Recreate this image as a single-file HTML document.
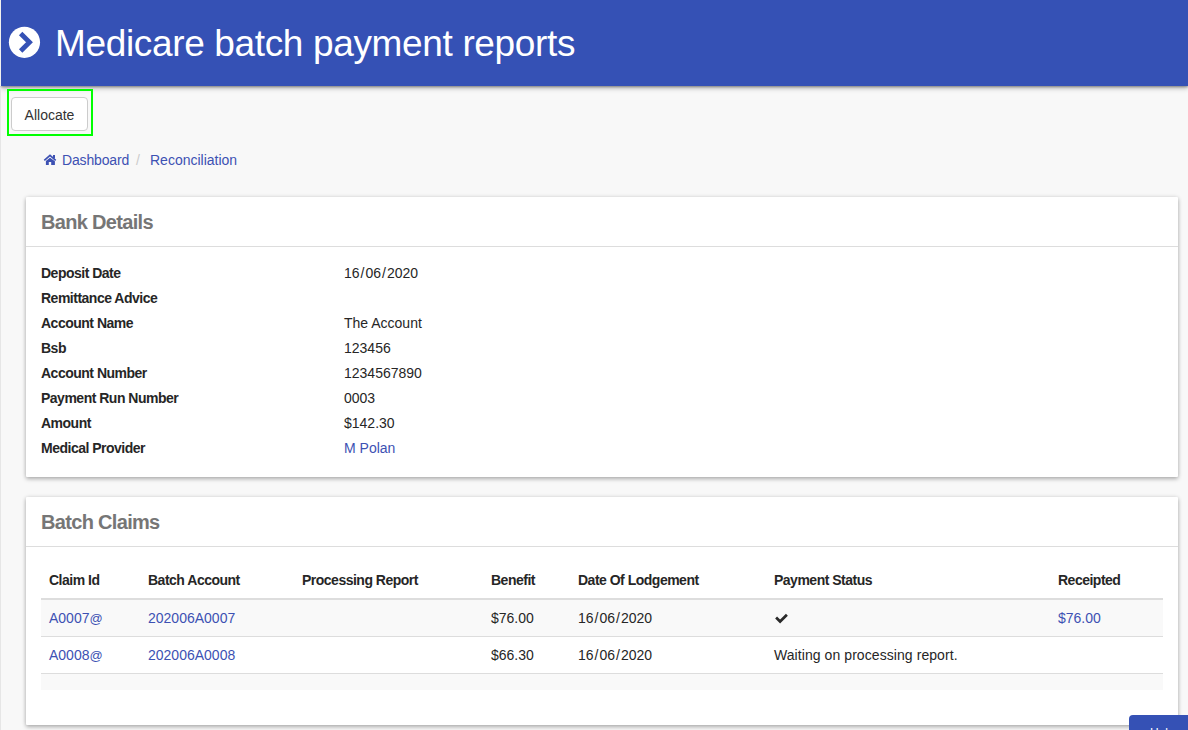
<!DOCTYPE html>
<html><head><meta charset="utf-8">
<style>
*{box-sizing:border-box;margin:0;padding:0}
html,body{width:1188px;height:730px;overflow:hidden;background:#f8f8f8;font-family:"Liberation Sans",sans-serif;color:#262626}
i{font-style:normal;padding:0 1px}
#lstrip{position:absolute;left:0;top:88px;width:1px;height:642px;background:#e6e6e6}
#hdr{position:absolute;left:1px;top:0;width:1187px;height:86px;background:#3551b5;box-shadow:0 1px 2px rgba(0,0,0,.3),0 2px 5px rgba(0,0,0,.3)}
#title{position:absolute;left:54px;top:22px;color:#fff;font-size:37px;line-height:44px;letter-spacing:-0.35px;white-space:nowrap}
#green{position:absolute;left:7px;top:89px;width:86px;height:47px;border:2px solid #00ff00}
#btn{position:absolute;left:11px;top:97px;width:77px;height:34px;border:1px solid #ccc;border-radius:4px;background:#fff;font-size:14px;line-height:35px;text-align:center;color:#333}
.link{color:#3d51b3}
.bc{position:absolute;top:151px;font-size:14px;line-height:18px;white-space:nowrap}
.card{position:absolute;left:26px;width:1152px;background:#fff;border-radius:1px;box-shadow:0 2px 4px rgba(0,0,0,.28),0 0 4px rgba(0,0,0,.1)}
.ctitle{position:absolute;left:15px;font-size:20px;font-weight:bold;color:#767676;line-height:24px;letter-spacing:-0.68px;white-space:nowrap}
.cdiv{position:absolute;left:0;width:100%;height:1px;background:#ddd}
.lbl{position:absolute;left:15px;font-size:14px;font-weight:bold;line-height:18px;letter-spacing:-0.5px;white-space:nowrap}
.val{position:absolute;left:318px;font-size:14px;line-height:18px;white-space:nowrap}
.th{position:absolute;top:571px;font-size:14px;font-weight:bold;line-height:18px;letter-spacing:-0.5px;white-space:nowrap}
.td{position:absolute;font-size:14px;line-height:18px;white-space:nowrap}
.ln{position:absolute;left:41px;width:1122px}
</style></head><body>
<div id="hdr">
  <div id="title">Medicare batch payment reports</div>
</div>
<svg style="position:absolute;left:0;top:0" width="60" height="86" viewBox="0 0 60 86">
  <circle cx="24.45" cy="42.3" r="15.6" fill="#fff"/>
  <polyline points="20.65,33.55 29.5,42.3 20.65,51.05" fill="none" stroke="#3551b5" stroke-width="4.8" stroke-linejoin="miter"/>
</svg>
<div id="lstrip"></div>
<div style="position:absolute;left:0;top:0;width:1px;height:86px;background:#f2f2ee"></div>
<div id="green"></div>
<div id="btn">Allocate</div>
<svg style="position:absolute;left:40px;top:150px" width="20" height="20" viewBox="40 150 20 20">
  <polyline points="44.3,160.4 50,155.4 55.7,160.4" fill="none" stroke="#3d51b3" stroke-width="1.7"/>
  <rect x="53" y="155" width="2" height="3.5" fill="#3d51b3"/>
  <path d="M45.9,161 L50,157.7 L54.9,161.3 V165 H51.2 V162 H48.8 V165 H45.9 Z" fill="#3d51b3"/>
</svg>
<div class="bc link" style="left:62px;letter-spacing:-0.15px">Dashboard</div>
<div class="bc" style="left:136px;color:#ccc">/</div>
<div class="bc link" style="left:150px">Reconciliation</div>

<div class="card" style="top:197px;height:280px">
  <div class="ctitle" style="top:13px">Bank Details</div>
  <div class="cdiv" style="top:49px"></div>
  <div class="lbl" style="top:67px">Deposit Date</div>
  <div class="lbl" style="top:92px">Remittance Advice</div>
  <div class="lbl" style="top:117px">Account Name</div>
  <div class="lbl" style="top:142px">Bsb</div>
  <div class="lbl" style="top:167px">Account Number</div>
  <div class="lbl" style="top:192px">Payment Run Number</div>
  <div class="lbl" style="top:217px">Amount</div>
  <div class="lbl" style="top:242px">Medical Provider</div>
  <div class="val" style="top:67px">16<i>/</i>06<i>/</i>2020</div>
  <div class="val" style="top:117px">The Account</div>
  <div class="val" style="top:142px">123456</div>
  <div class="val" style="top:167px">1234567890</div>
  <div class="val" style="top:192px">0003</div>
  <div class="val" style="top:217px">$142.30</div>
  <div class="val link" style="top:242px">M Polan</div>
</div>

<div class="card" style="top:497px;height:228px">
  <div class="ctitle" style="top:13px">Batch Claims</div>
  <div class="cdiv" style="top:49px"></div>
</div>
<div class="ln" style="top:598px;height:2px;background:#ddd"></div>
<div class="ln" style="top:600px;height:36px;background:#f9f9f9"></div>
<div class="ln" style="top:636px;height:1px;background:#ddd"></div>
<div class="ln" style="top:673px;height:1px;background:#ddd"></div>
<div class="ln" style="top:674px;height:16px;background:#f9f9f9"></div>
<div class="th" style="left:49px">Claim Id</div>
<div class="th" style="left:148px">Batch Account</div>
<div class="th" style="left:302px">Processing Report</div>
<div class="th" style="left:491px">Benefit</div>
<div class="th" style="left:578px">Date Of Lodgement</div>
<div class="th" style="left:774px">Payment Status</div>
<div class="th" style="left:1058px">Receipted</div>

<div class="td link" style="left:49px;top:609px">A0007<span style="font-size:13px">@</span></div>
<div class="td link" style="left:148px;top:609px">202006A0007</div>
<div class="td" style="left:491px;top:609px">$76.00</div>
<div class="td" style="left:578px;top:609px">16<i>/</i>06<i>/</i>2020</div>
<svg style="position:absolute;left:770px;top:608px" width="22" height="18" viewBox="770 608 22 18">
  <polyline points="776.1,617.5 780.1,621.5 786.9,614.7" fill="none" stroke="#2a2a2a" stroke-width="2.7"/>
</svg>
<div class="td link" style="left:1058px;top:609px">$76.00</div>

<div class="td link" style="left:49px;top:646px">A0008<span style="font-size:13px">@</span></div>
<div class="td link" style="left:148px;top:646px">202006A0008</div>
<div class="td" style="left:491px;top:646px">$66.30</div>
<div class="td" style="left:578px;top:646px">16<i>/</i>06<i>/</i>2020</div>
<div class="td" style="left:774px;top:646px;letter-spacing:0.07px">Waiting on processing report.</div>

<div style="position:absolute;left:1129px;top:715px;width:70px;height:40px;background:#3551b5;border-radius:4px 0 0 0;overflow:hidden">
  <div style="position:absolute;left:21px;top:11px;color:#fff;font-size:12px;line-height:14px">Help</div>
</div>
</body></html>
